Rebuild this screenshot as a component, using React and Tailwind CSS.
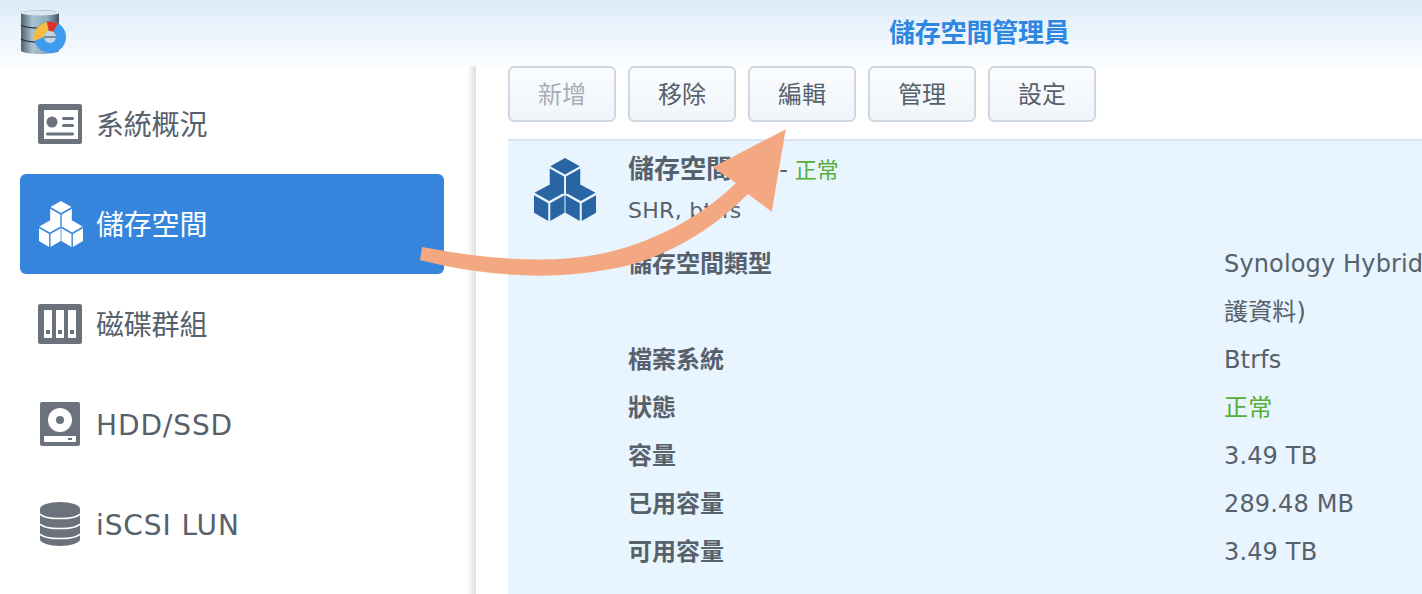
const FONT = "font-['DejaVu_Sans','Noto_Sans_CJK_TC',sans-serif]";

function Cubes({ fill, className }) {
  const Cube = ({ x, y }) => (
    <g transform={`translate(${x} ${y})`}>
      <path d="M0 -15.5 L15 -7.5 L0 0.5 L-15 -7.5 Z" fill={fill} />
      <path d="M-15.5 -5.2 L-1 2.6 L-1 20 L-15.5 12 Z" fill={fill} />
      <path d="M15.5 -5.2 L1 2.6 L1 20 L15.5 12 Z" fill={fill} />
    </g>
  );
  return (
    <svg viewBox="0.5 0.5 63 61.5" preserveAspectRatio="none" className={className}>
      <Cube x={32} y={16} />
      <Cube x={16} y={42} />
      <Cube x={48} y={42} />
    </svg>
  );
}

function OverviewIcon() {
  return (
    <svg viewBox="0 0 44 40" className="w-[44px] h-[40px]">
      <rect width="44" height="40" rx="2" fill="#6b727b" />
      <rect x="6" y="6" width="34" height="29" fill="#fff" />
      <circle cx="14" cy="18" r="5.5" fill="#6b727b" />
      <rect x="24" y="13" width="12" height="3" rx="1.5" fill="#6b727b" />
      <rect x="24" y="20" width="12" height="3" rx="1.5" fill="#6b727b" />
      <rect x="8" y="28.5" width="28" height="3" rx="1.5" fill="#6b727b" />
    </svg>
  );
}

function GroupIcon() {
  return (
    <svg viewBox="0 0 44 40" className="w-[44px] h-[40px]">
      <rect width="44" height="40" rx="2" fill="#6b727b" />
      <rect x="6" y="6" width="8" height="28" rx="0.5" fill="#fff" />
      <rect x="18" y="6" width="8" height="28" rx="0.5" fill="#fff" />
      <rect x="30" y="6" width="8" height="28" rx="0.5" fill="#fff" />
      <rect x="8" y="26" width="4" height="4" fill="#6b727b" />
      <rect x="20" y="26" width="4" height="4" fill="#6b727b" />
      <rect x="32" y="26" width="4" height="4" fill="#6b727b" />
    </svg>
  );
}

function HddIcon() {
  return (
    <svg viewBox="0 0 40 44" className="w-[40px] h-[44px]">
      <rect width="40" height="44" rx="2" fill="#6b727b" />
      <circle cx="20" cy="18" r="12" fill="#fff" />
      <circle cx="20" cy="18" r="4" fill="#6b727b" />
      <rect x="4" y="34" width="32" height="6" rx="1" fill="#fff" />
      <rect x="28" y="36" width="4" height="2" fill="#6b727b" />
    </svg>
  );
}

function DbIcon() {
  return (
    <svg viewBox="0 0 40 44" className="w-[40px] h-[44px]">
      <ellipse cx="20" cy="7" rx="20" ry="7" fill="#6b727b" />
      <rect y="7" width="40" height="30" fill="#6b727b" />
      <ellipse cx="20" cy="37" rx="20" ry="7" fill="#6b727b" />
      <path d="M0 12 C5 18 35 18 40 12" fill="none" stroke="#fff" strokeWidth="1.6" />
      <path d="M0 22 C5 28 35 28 40 22" fill="none" stroke="#fff" strokeWidth="1.6" />
      <path d="M0 32 C5 38 35 38 40 32" fill="none" stroke="#fff" strokeWidth="1.6" />
    </svg>
  );
}

function Logo() {
  return (
    <svg viewBox="0 0 48 46" className="w-[48px] h-[46px]">
      <defs>
        <linearGradient id="can" x1="0" x2="1" y1="0" y2="0">
          <stop offset="0" stopColor="#51606c" />
          <stop offset="0.3" stopColor="#a9c2d2" />
          <stop offset="0.7" stopColor="#8fa9bb" />
          <stop offset="1" stopColor="#46535e" />
        </linearGradient>
      </defs>
      <path d="M1 3 C6 -1 34 -1 39 3 L39 41 C34 45 6 45 1 41 Z" fill="url(#can)" />
      <ellipse cx="20" cy="3" rx="19" ry="2.4" fill="#dbe6ee" />
      <path d="M1 15 C6 19 34 19 39 15" fill="none" stroke="#27313a" strokeWidth="1.2" />
      <path d="M1 29 C6 33 34 33 39 29" fill="none" stroke="#27313a" strokeWidth="1.2" />
      <circle cx="30" cy="27" r="16" fill="#3f9bf0" />
      <path d="M14 31 A16 16 0 0 1 27 12 L29 21.5 A6 6 0 0 0 24 27 Z" fill="#f6bb42" />
      <path d="M27 12 A16 16 0 0 1 38 13.5 L33 22 A6 6 0 0 0 29 21.5 Z" fill="#de3226" />
      <circle cx="30" cy="27" r="6" fill="#c6d6e0" />
      <path d="M24 27 L36 27" stroke="#39454f" strokeWidth="1" />
    </svg>
  );
}

function NavItem({ icon, label, active, latin }) {
  return (
    <div className={`h-[100px] rounded-[6px] flex items-center ${active ? "bg-[#3585dd] text-white" : "text-[#56616c]"}`}>
      <div className="w-[76px] pl-[17px] pr-[13px] flex justify-center shrink-0">{icon}</div>
      <span className={`text-[28px] leading-none pt-[3px] ${latin ? "tracking-[0.9px]" : "tracking-[-0.2px]"}`}>{label}</span>
    </div>
  );
}

function Btn({ children, disabled }) {
  return (
    <button className={`w-[108px] h-[56px] rounded-[6px] border-2 border-[#cfd8e2] bg-gradient-to-b from-[#fafcfe] to-[#f1f5fa] text-[24px] pt-[1px] ${disabled ? "text-[#a6adb5]" : "text-[#56616c]"}`}>
      {children}
    </button>
  );
}

function Row({ label, children }) {
  return (
    <div className="flex">
      <div className="w-[596px] shrink-0 font-bold text-[#56616c]">{label}</div>
      <div className="flex-1 whitespace-nowrap tracking-[0.15px]">{children}</div>
    </div>
  );
}

export default function App() {
  return (
    <div className={`relative w-[1422px] h-[594px] overflow-hidden bg-white flex flex-col ${FONT}`}>
      <header className="h-[66px] shrink-0 flex items-start bg-gradient-to-b from-[#dcebf8] to-[#fafdff] relative">
        <div className="pl-[20px] pt-[10px]"><Logo /></div>
        <h1 className="absolute left-[889px] top-[16px] text-[26px] leading-[34px] font-bold tracking-[-0.2px] text-[#2f86e0]">儲存空間管理員</h1>
      </header>
      <div className="flex-1 flex min-h-0">
        <aside className="w-[476px] shrink-0 pl-[20px] flex">
          <nav className="w-[424px] shrink-0 pt-[8px]">
            <NavItem icon={<OverviewIcon />} label="系統概況" />
            <NavItem active icon={<Cubes fill="#fff" className="w-[46px] h-[46px] ml-[2px]" />} label="儲存空間" />
            <NavItem icon={<GroupIcon />} label="磁碟群組" />
            <NavItem latin icon={<HddIcon />} label="HDD/SSD" />
            <NavItem latin icon={<DbIcon />} label="iSCSI LUN" />
          </nav>
          <div className="ml-[23px] w-[9px] bg-gradient-to-r from-white to-[#e0e0e0]"></div>
        </aside>
        <main className="flex-1 min-w-0 pl-[32px] flex flex-col">
          <div className="flex gap-[12px] h-[73px] shrink-0">
            <Btn disabled>新增</Btn>
            <Btn>移除</Btn>
            <Btn>編輯</Btn>
            <Btn>管理</Btn>
            <Btn>設定</Btn>
          </div>
          <section className="flex-1 border-t-2 border-[#d8e4ee] bg-[#e8f4fe] flex text-[#56616c] overflow-hidden">
            <div className="w-[120px] shrink-0 pl-[26px] pt-[17px]">
              <Cubes fill="#2a65a3" className="w-[62px] h-[63px]" />
            </div>
            <div className="flex-1 min-w-0">
              <div className="flex items-baseline h-[58px] pt-[9px]">
                <span className="text-[26px] font-bold leading-[38px]">儲存空間 1</span>
                <span className="text-[24px] leading-[38px] ml-[20px]">-</span>
                <span className="text-[22px] leading-[38px] ml-[7px] text-[#55ae35]">正常</span>
              </div>
              <div className="text-[22px] leading-[24px] tracking-[0.3px]">SHR, btrfs</div>
              <div className="mt-[17px] text-[24px] leading-[48px]">
                <Row label="儲存空間類型">Synology Hybrid RAID (SHR) (可保<br />護資料)</Row>
                <Row label="檔案系統">Btrfs</Row>
                <Row label="狀態"><span className="text-[#55ae35]">正常</span></Row>
                <Row label="容量">3.49 TB</Row>
                <Row label="已用容量">289.48 MB</Row>
                <Row label="可用容量">3.49 TB</Row>
              </div>
            </div>
          </section>
        </main>
      </div>
      <svg viewBox="0 0 1422 594" className="absolute inset-0 w-[1422px] h-[594px] pointer-events-none">
        <path
          d="M422 247 C480 258 545 265 600 254 C650 244 700 218 736 183 L712.7 167.3 L785.7 129.3 L771.7 211.7 L748 194 C710 232 660 262 605 270 C540 282 470 273 420 260 Z"
          fill="#f4a882"
        />
      </svg>
    </div>
  );
}
